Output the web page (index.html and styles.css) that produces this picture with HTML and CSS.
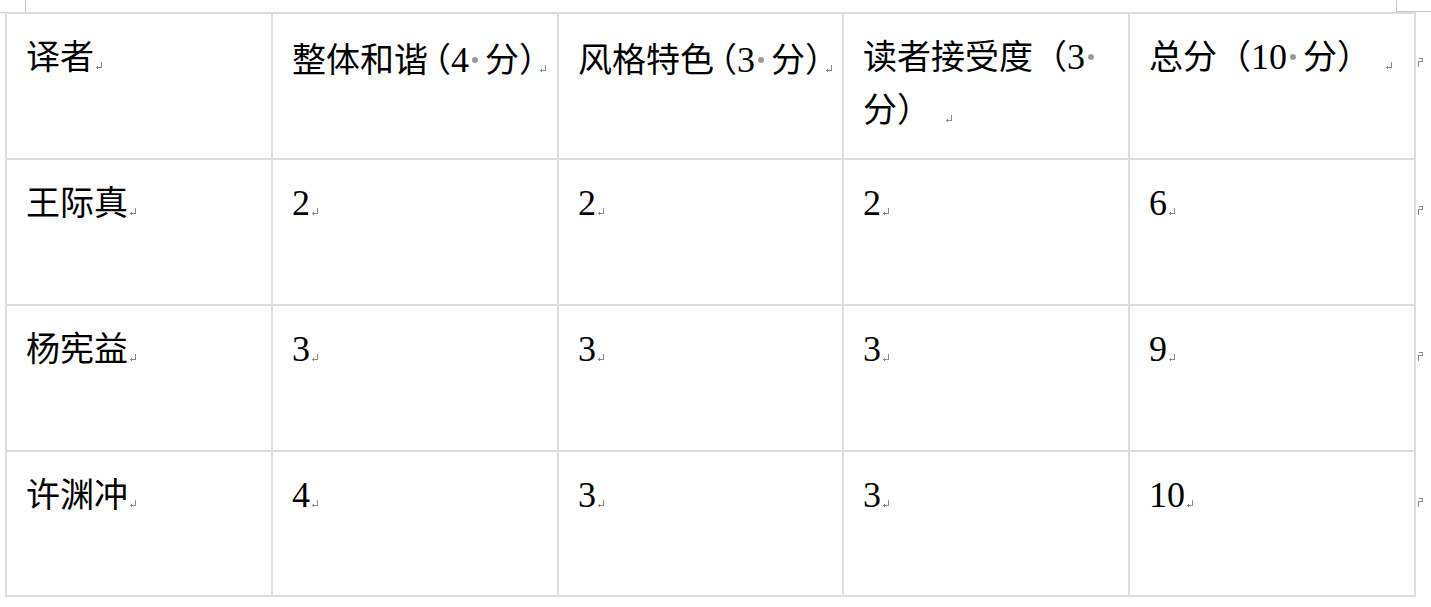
FILE: index.html
```html
<!DOCTYPE html>
<html lang="zh-CN">
<head>
<meta charset="utf-8">
<title>译者评分表</title>
<link rel="stylesheet" href="styles.css">
</head>
<body>
<div class="page">
  <span class="crop crop-l"></span>
  <span class="crop crop-r"></span>
  <div class="tbl">
    <div class="c first top">译者<i class="pm"></i></div>
    <div class="c top">整体和谐<span class="po">（</span><span class="n">4</span><span class="sp"></span>分<span class="pc">）</span><i class="pm"></i></div>
    <div class="c top">风格特色<span class="po">（</span><span class="n">3</span><span class="sp"></span>分<span class="pc">）</span><i class="pm"></i></div>
    <div class="c top">读者接受度（<span class="n">3</span><span class="sp"></span><br>分）<i class="pm gap"></i></div>
    <div class="c top">总分（<span class="n">10</span><span class="sp"></span>分）<i class="pm gap"></i></div>
    <div class="end"><i class="rm"></i></div>

    <div class="c first">王际真<i class="pm"></i></div>
    <div class="c"><span class="n">2</span><i class="pm"></i></div>
    <div class="c"><span class="n">2</span><i class="pm"></i></div>
    <div class="c"><span class="n">2</span><i class="pm"></i></div>
    <div class="c"><span class="n">6</span><i class="pm"></i></div>
    <div class="end"><i class="rm"></i></div>

    <div class="c first">杨宪益<i class="pm"></i></div>
    <div class="c"><span class="n">3</span><i class="pm"></i></div>
    <div class="c"><span class="n">3</span><i class="pm"></i></div>
    <div class="c"><span class="n">3</span><i class="pm"></i></div>
    <div class="c"><span class="n">9</span><i class="pm"></i></div>
    <div class="end"><i class="rm"></i></div>

    <div class="c first">许渊冲<i class="pm"></i></div>
    <div class="c"><span class="n">4</span><i class="pm"></i></div>
    <div class="c"><span class="n">3</span><i class="pm"></i></div>
    <div class="c"><span class="n">3</span><i class="pm"></i></div>
    <div class="c"><span class="n">10</span><i class="pm"></i></div>
    <div class="end"><i class="rm"></i></div>
  </div>
</div>
</body>
</html>
```

FILE: styles.css
```css
html, body {
  margin: 0;
  padding: 0;
  background: #ffffff;
}
.page {
  position: relative;
  width: 1431px;
  height: 607px;
  overflow: hidden;
  padding-top: 12px;
  box-sizing: border-box;
}
.crop {
  position: absolute;
  top: 0;
  border-color: #c6c6c6;
  border-style: solid;
}
.crop-l {
  left: 0;
  width: 25px;
  height: 12px;
  border-width: 0 1px 1px 0;
}
.crop-r {
  left: 1396px;
  width: 40px;
  height: 11px;
  border-width: 0 0 1px 1px;
}
.tbl {
  position: relative;
  margin-left: 5px;
  display: grid;
  grid-template-columns: 268px 286px 285px 286px 286px 15px;
  grid-template-rows: 148px 146px 146px 145px;
  font-family: "Liberation Serif", "Noto Sans CJK SC", serif;
  font-size: 34px;
  line-height: 53px;
  color: #000;
}
.c {
  box-sizing: border-box;
  border-right: 2px solid #dcdcde;
  border-bottom: 2px solid #dcdcde;
  padding: 17px 4px 0 19px;
  white-space: nowrap;
}
.c.top {
  border-top: 2px solid #dcdcde;
}
.c.first {
  border-left: 2px solid #dcdcde;
}
.n {
  font-size: 36px;
  line-height: 53px;
}
.po,
.pc {
  font-family: "Noto Sans CJK SC", sans-serif;
  font-feature-settings: "halt" 1;
}
.po {
  padding-left: 6px;
}
.pc {
  padding-right: 2px;
}
.sp {
  display: inline-block;
  width: 6px;
  height: 6px;
  border-radius: 50%;
  background: #9a9a9a;
  margin: 0 7px 0 3px;
  vertical-align: 9px;
}
.pm {
  display: inline-block;
  width: 8px;
  height: 8px;
  margin-left: 1px;
  vertical-align: -1px;
  background:
    linear-gradient(#8a8a8a, #8a8a8a) 6px 0 / 1px 6px no-repeat,
    linear-gradient(#8a8a8a, #8a8a8a) 1px 5px / 6px 1px no-repeat,
    linear-gradient(#8a8a8a, #8a8a8a) 2px 4px / 1px 3px no-repeat;
}
.pm.gap {
  margin-left: 14px;
}
.end {
  padding-top: 46px;
  padding-left: 2px;
}
.rm {
  display: block;
  width: 6px;
  height: 9px;
  background:
    linear-gradient(#8a8a8a, #8a8a8a) 0 3px / 1px 6px no-repeat,
    linear-gradient(#8a8a8a, #8a8a8a) 1px 0 / 4px 1px no-repeat,
    linear-gradient(#8a8a8a, #8a8a8a) 4px 0 / 1px 4px no-repeat,
    linear-gradient(#8a8a8a, #8a8a8a) 0 3px / 5px 1px no-repeat;
}
```
